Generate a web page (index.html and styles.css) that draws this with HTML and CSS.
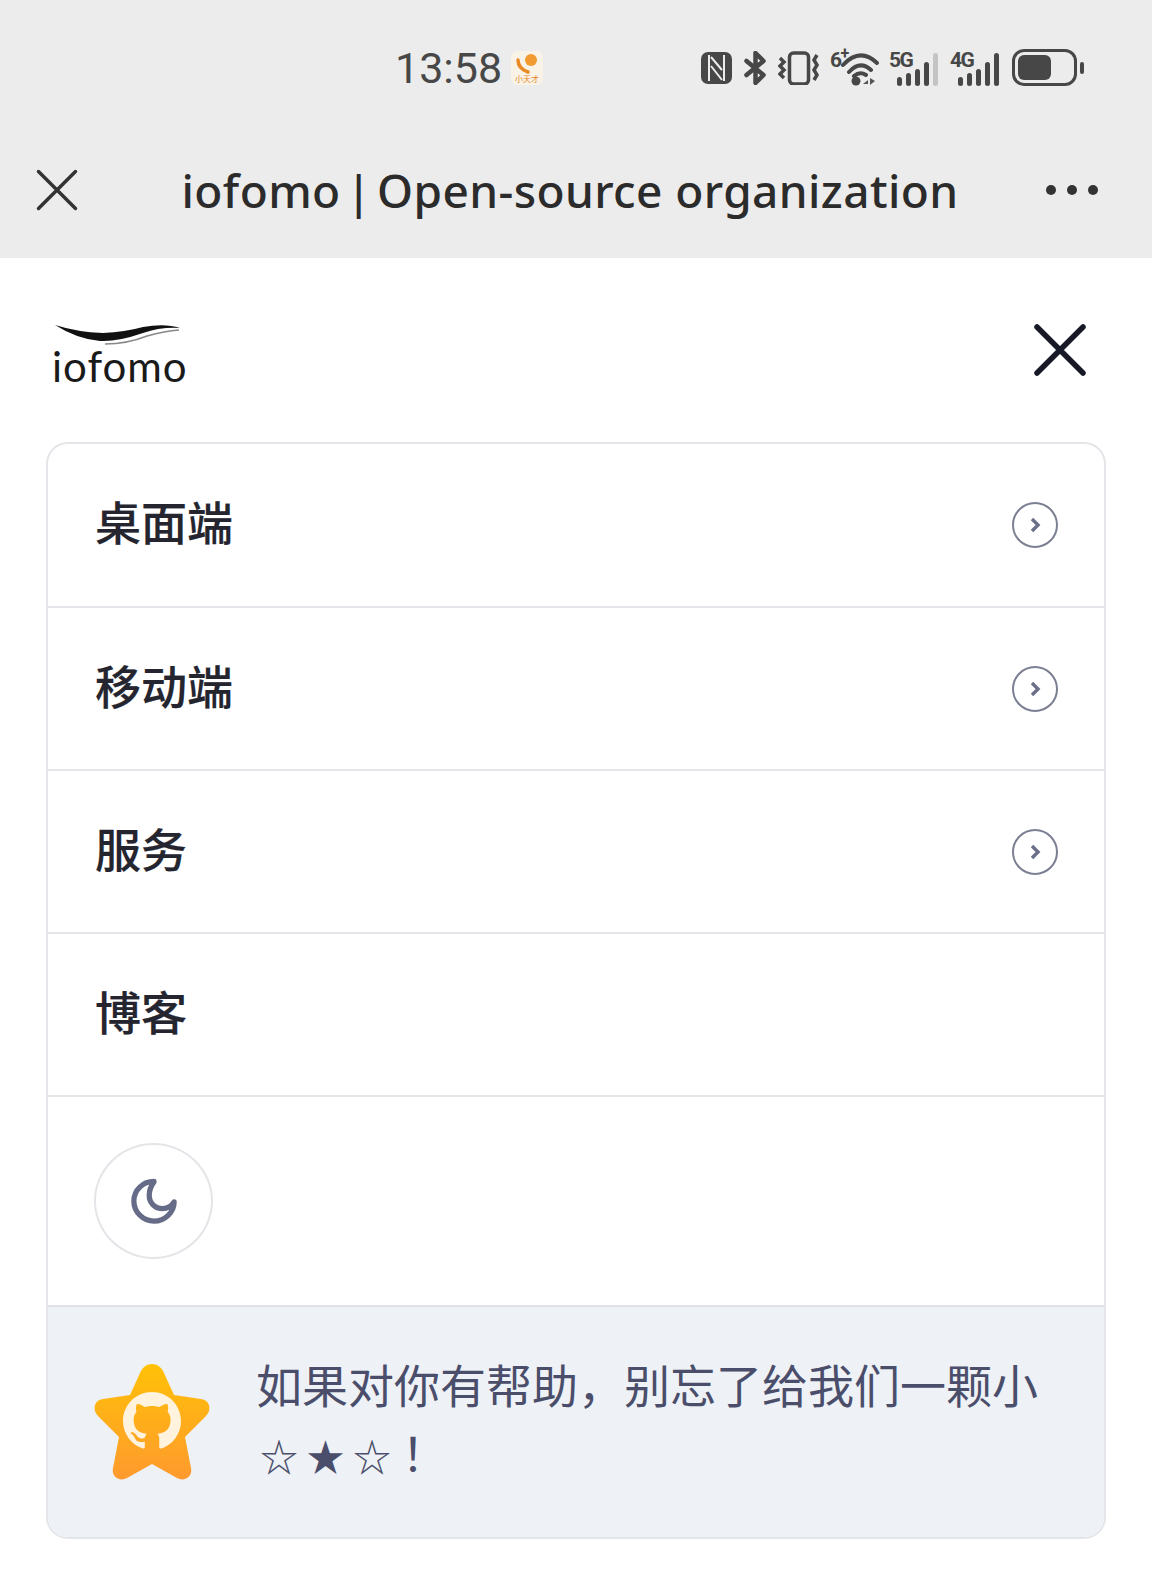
FILE: index.html
```html
<!DOCTYPE html>
<html lang="en">
<head>
  <meta charset="UTF-8" />
  <title>iofomo | Open-source organization</title>
  <link rel="stylesheet" href="styles.css">
</head>
<body>
  <div class="chrome">
    <div class="status">
      <span class="time">13:58</span>
      <svg class="app-icon" width="32" height="34" viewBox="0 0 32 34">
        <rect width="32" height="34" rx="7" fill="#f9f2e6"/>
        <circle cx="20" cy="9" r="6" fill="#f09a30"/>
        <path d="M7 9c0 6 4 10 10 12" fill="none" stroke="#ea8a22" stroke-width="3.500" stroke-linecap="round"/>
        <text class="app-icon-text" x="16" y="31" text-anchor="middle">小天才</text>
      </svg>
      <div class="status-icons">
        <svg width="31" height="32" viewBox="0 0 31 32">
          <rect width="31" height="32" rx="7" fill="#474747"/>
          <path d="M8 3v26M23 3v26M10 5l11 13M10 14l11 14" fill="none" stroke="#ececec" stroke-width="2"/>
        </svg>
        <svg width="22" height="34" viewBox="0 0 22 34">
          <path d="M2.500 10l17 14-8 8V2l8 8-17 14" fill="none" stroke="#474747" stroke-width="4.500" stroke-linejoin="round" stroke-linecap="round"/>
        </svg>
        <svg width="42" height="34" viewBox="0 0 42 34">
          <rect x="11.500" y="2" width="19" height="31" rx="4" fill="none" stroke="#474747" stroke-width="3.500"/>
          <path d="M2 7l4 4-4 4 4 4-4 4 4 4M39 4l-3 5 3 5-3 5 3 5-3 5" fill="none" stroke="#474747" stroke-width="3.500"/>
        </svg>
        <div class="net net-wifi">
          <span class="net-label">6<sup>+</sup></span>
          <svg width="38" height="36" viewBox="0 0 38 36">
            <path d="M2 15Q19 -3 36 13M8 22Q19 10 30 20M13 26Q19 21 25 25" fill="none" stroke="#474747" stroke-width="4" stroke-linecap="round"/>
            <circle cx="15" cy="31" r="4.500" fill="#474747"/>
            <path d="M22 34l5-4v4zM29 28v7l5-4z" fill="#555"/>
          </svg>
        </div>
        <div class="net">
          <span class="net-label">5G</span>
          <div class="bars">
            <i class="b1"></i><i class="b2"></i><i class="b3"></i><i class="b4"></i><i class="b5 off"></i>
          </div>
        </div>
        <div class="net">
          <span class="net-label">4G</span>
          <div class="bars">
            <i class="b1"></i><i class="b2"></i><i class="b3"></i><i class="b4"></i><i class="b5"></i>
          </div>
        </div>
        <div class="battery">
          <div class="battery-body"><div class="battery-fill"></div></div>
          <div class="battery-tip"></div>
        </div>
      </div>
    </div>
    <div class="titlebar">
      <svg width="42" height="42" viewBox="0 0 42 42">
        <path d="M2.500 2.500l37 37M39.500 2.500l-37 37" stroke="#333" stroke-width="3.500" stroke-linecap="round"/>
      </svg>
      <div class="title">iofomo<span class="title-sep"> | </span>Open-source organization</div>
      <div class="dots"><i></i><i></i><i></i></div>
    </div>
  </div>

  <div class="page">
    <header class="top">
      <div class="logo">
        <svg class="swoosh" width="126" height="23" viewBox="0 0 126 23">
          <path d="M0 2Q22 9 48 10 70 9 88 4 110 0 125 5 105 4 88 10 62 19 45 18 22 16 0 2z" fill="#111"/>
          <path d="M50 21Q72 21 92 13 110 8 124 7" fill="none" stroke="#888" stroke-width="1.500"/>
        </svg>
        <div class="logo-text">iofomo</div>
      </div>
      <svg width="52" height="52" viewBox="0 0 52 52">
        <path d="M3 3l46 46M49 3L3 49" stroke="#181926" stroke-width="5.500" stroke-linecap="round"/>
      </svg>
    </header>

    <div class="card">
      <div class="row">
        <span class="row-label">桌面端</span>
        <svg class="chevron" width="46" height="46" viewBox="0 0 46 46">
          <circle cx="23" cy="23" r="22" fill="none" stroke="#7b7f92" stroke-width="2"/>
          <path d="M20 17l6 6-6 6" fill="none" stroke="#6b6f88" stroke-width="3.400"/>
        </svg>
      </div>
      <div class="row">
        <span class="row-label">移动端</span>
        <svg class="chevron" width="46" height="46" viewBox="0 0 46 46">
          <circle cx="23" cy="23" r="22" fill="none" stroke="#7b7f92" stroke-width="2"/>
          <path d="M20 17l6 6-6 6" fill="none" stroke="#6b6f88" stroke-width="3.400"/>
        </svg>
      </div>
      <div class="row">
        <span class="row-label">服务</span>
        <svg class="chevron" width="46" height="46" viewBox="0 0 46 46">
          <circle cx="23" cy="23" r="22" fill="none" stroke="#7b7f92" stroke-width="2"/>
          <path d="M20 17l6 6-6 6" fill="none" stroke="#6b6f88" stroke-width="3.400"/>
        </svg>
      </div>
      <div class="row">
        <span class="row-label">博客</span>
      </div>
      <div class="row-theme">
        <div class="theme-btn">
          <svg width="46" height="46" viewBox="0 0 48 48">
            <path d="M24 3.500C12.500 3.500 3 12.500 3 24s9.500 21 21 21 21-9.500 21-20c-3 5-8 7-12 7-8 0-14-6-14-14 0-5 2-10 5-14z" fill="none" stroke="#666c87" stroke-width="5.500" stroke-linejoin="round"/>
          </svg>
        </div>
      </div>
      <div class="promo">
        <svg class="promo-star" width="116" height="116" viewBox="0 0 116 116">
          <defs>
            <linearGradient id="starFill" x1="0" y1="0" x2="0" y2="1">
              <stop offset="0" stop-color="#ffc107"/>
              <stop offset="1" stop-color="#ff9a2e"/>
            </linearGradient>
          </defs>
          <path d="M58 0c6 0 10 4 12 9l10 22 27 4c9 1 11 11 5 17L91 73l6 31c2 9-7 14-14 10L58 100l-25 14c-7 4-16-1-14-10l6-31L4 52c-6-6-4-16 5-17l27-4 10-22c2-5 6-9 12-9z" fill="url(#starFill)"/>
          <path transform="translate(29 28) scale(3.625)" d="M8 0C3.580 0 0 3.580 0 8c0 3.540 2.290 6.530 5.470 7.590.4.070.55-.17.55-.38 0-.19-.01-.82-.01-1.490-2.010.37-2.530-.49-2.690-.94-.09-.23-.48-.94-.82-1.130-.28-.15-.68-.52-.01-.53.63-.01 1.080.58 1.230.82.72 1.210 1.870.87 2.330.66.07-.52.28-.87.51-1.070-1.780-.2-3.640-.89-3.640-3.950 0-.87.31-1.590.82-2.150-.08-.2-.36-1.020.08-2.120 0 0 .67-.21 2.200.82.64-.18 1.320-.27 2-.27.68 0 1.360.09 2 .27 1.530-1.040 2.200-.82 2.200-.82.44 1.100.16 1.920.08 2.120.51.56.82 1.270.82 2.150 0 3.070-1.870 3.750-3.650 3.950.29.25.54.73.54 1.480 0 1.070-.01 1.930-.01 2.200 0 .21.15.46.55.38A8.013 8.013 0 0 0 16 8c0-4.420-3.580-8-8-8z" fill="#fff3de"/>
        </svg>
        <div class="promo-text">如果对你有帮助，别忘了给我们一颗小<span class="promo-stars">☆★☆</span>！</div>
      </div>
    </div>
  </div>
</body>
</html>
```

FILE: styles.css
```css
* {
  box-sizing: border-box;
}
body {
  margin: 0;
  background: #fff;
  font-family: 'Roboto', 'Noto Sans CJK SC', sans-serif;
}
.chrome {
  background: #ececec;
  height: 258px;
}
.status {
  height: 135px;
  display: flex;
  align-items: center;
  padding: 0 68px 0 395px;
}
.time {
  font-size: 43px;
  color: #474747;
}
.app-icon {
  margin-left: 9px;
}
.app-icon-text {
  font-size: 8px;
  fill: #e8862a;
  font-family: 'Noto Sans CJK SC', sans-serif;
}
.status-icons {
  margin-left: auto;
  display: flex;
  align-items: center;
  gap: 12px;
}
.net {
  display: flex;
  align-items: flex-end;
  height: 36px;
}
.net-label {
  width: 8px;
  margin-top: 2px;
  font-size: 21px;
  font-weight: 700;
  color: #474747;
  line-height: 16px;
  align-self: flex-start;
  letter-spacing: -1.500px;
  white-space: nowrap;
}
.net-label sup {
  font-size: 16px;
  line-height: 0;
}
.net-wifi {
  margin: 0 -2px;
}
.net-wifi .net-label {
  width: 11px;
}
.bars {
  display: flex;
  align-items: flex-end;
  gap: 4px;
}
.bars i {
  width: 5px;
  border-radius: 3px;
  background: #474747;
  display: block;
}
.b1 { height: 9px; }
.b2 { height: 13px; }
.b3 { height: 17px; }
.b4 { height: 24px; }
.b5 { height: 33px; }
.bars i.off {
  background: #c4c4c4;
}
.battery {
  display: flex;
  align-items: center;
  gap: 3px;
  margin-left: 1px;
}
.battery-body {
  width: 65px;
  height: 37px;
  border: 3px solid #474747;
  border-radius: 12px;
  padding: 3px;
}
.battery-fill {
  width: 33px;
  height: 100%;
  background: #474747;
  border-radius: 6px;
}
.battery-tip {
  width: 4px;
  height: 12px;
  background: #474747;
  border-radius: 2px;
}
.titlebar {
  height: 123px;
  display: flex;
  align-items: center;
  padding: 0 54px 14px 36px;
}
.title {
  flex: 1;
  padding-left: 16px;
  font-family: 'Noto Sans', sans-serif;
  font-size: 46px;
  font-weight: 500;
  letter-spacing: 0.400px;
  color: #2b2b2b;
  text-align: center;
  white-space: nowrap;
}
.title-sep {
  word-spacing: -7px;
}
.dots {
  display: flex;
  gap: 11px;
}
.dots i {
  width: 10px;
  height: 10px;
  border-radius: 50%;
  background: #333;
  display: block;
}
.page {
  padding: 0 46px;
}
.top {
  height: 184px;
  display: flex;
  align-items: center;
  justify-content: space-between;
  padding: 0 20px 0 6px;
}
.logo {
  display: flex;
  flex-direction: column;
  align-items: flex-start;
  margin-top: 8px;
}
.swoosh {
  margin-left: 3px;
}
.logo-text {
  font-family: 'Lato', sans-serif;
  font-size: 42px;
  line-height: 40px;
  color: #1a1a1a;
  letter-spacing: 1px;
}
.card {
  width: 1060px;
  border: 2px solid #e4e5e8;
  border-radius: 22px;
  overflow: hidden;
}
.row {
  height: 163px;
  display: flex;
  align-items: center;
  justify-content: space-between;
  padding: 0 46px 0 47px;
  border-bottom: 2px solid #e4e5e8;
}
.row:first-child {
  height: 164px;
}
.row-label {
  font-size: 46px;
  font-weight: 500;
  color: #24252f;
  margin-bottom: 10px;
  -webkit-text-stroke: 0.200px #24252f;
}
.row-theme {
  height: 208px;
  display: flex;
  align-items: center;
  padding-left: 46px;
}
.theme-btn {
  width: 119px;
  height: 116px;
  border: 2px solid #e4e5e8;
  border-radius: 50%;
  display: flex;
  align-items: center;
  justify-content: center;
}
.promo {
  height: 232px;
  background: #eef1f5;
  border-top: 2px solid #dfe1e6;
  display: flex;
  align-items: center;
  gap: 46px;
  padding: 0 40px 0 46px;
}
.promo-star {
  flex: none;
  margin-bottom: 1px;
}
.promo-text {
  font-size: 46px;
  line-height: 68px;
  color: #4a4e6b;
}
.promo-stars {
  font-size: 38px;
  letter-spacing: 8.500px;
  margin: 0 2px 0 4px;
}
```
